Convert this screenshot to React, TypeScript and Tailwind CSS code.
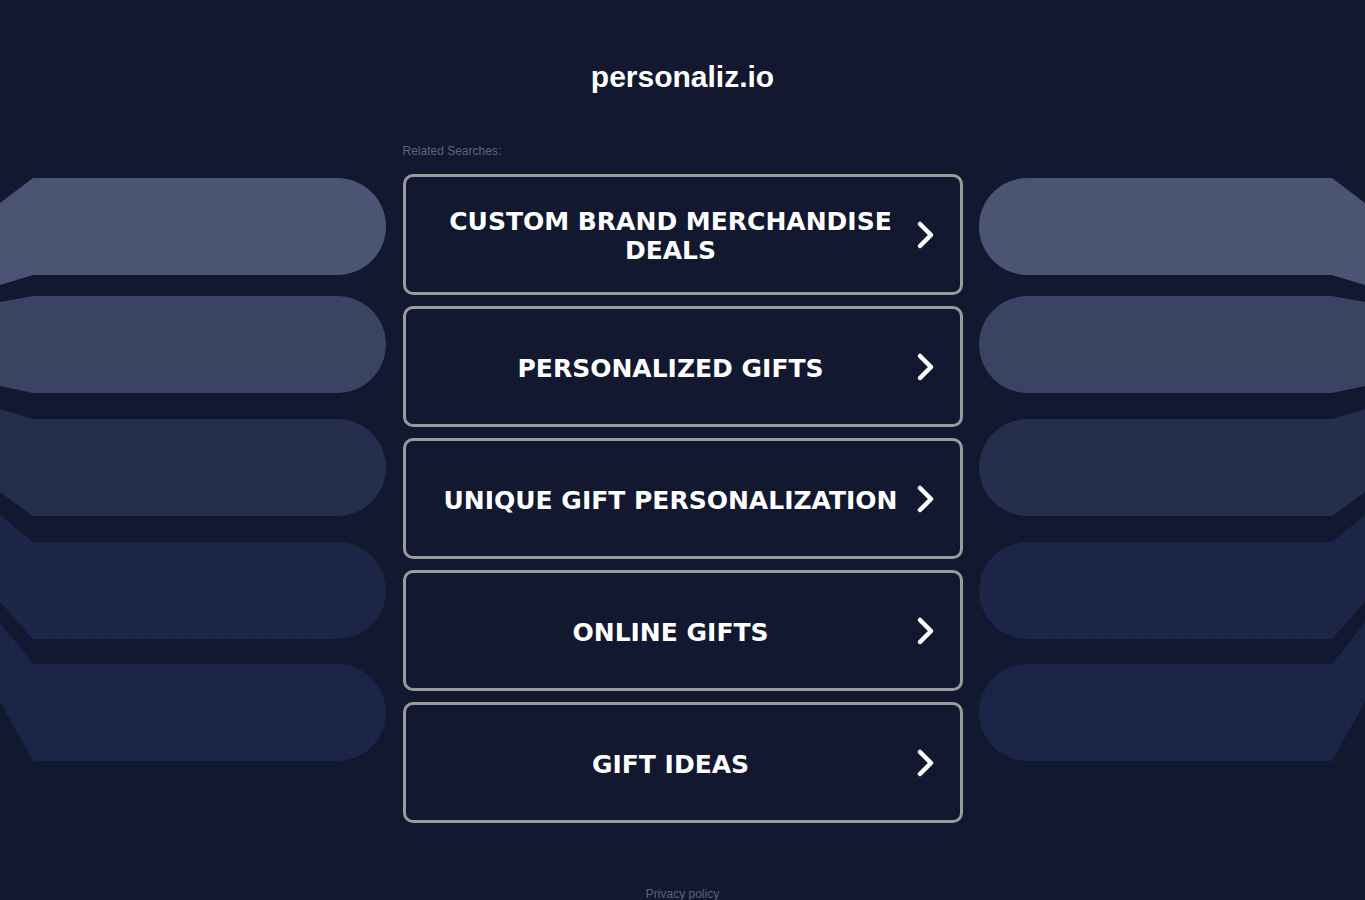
import React from 'react';

const searches = [
  'Custom Brand Merchandise Deals',
  'Personalized Gifts',
  'Unique Gift Personalization',
  'Online Gifts',
  'Gift Ideas',
];

// background fan shapes, left side coords (mirrored for right side)
const bands = [
  { top: 178, bottom: 275, lt: 203, lb: 285, fill: '#4b5573' },
  { top: 296, bottom: 393, lt: 302, lb: 386, fill: '#3a4462' },
  { top: 419, bottom: 516, lt: 409, lb: 492, fill: '#252e4d' },
  { top: 542, bottom: 639, lt: 515, lb: 602, fill: '#1c2545', dots: true },
  { top: 664, bottom: 761, lt: 622, lb: 702, fill: '#1a2446', dots: true },
];

const bandPath = (b: typeof bands[number]) => {
  const r = (b.bottom - b.top) / 2;
  const cx = 386 - r;
  return `M0,${b.lt} L33,${b.top} L${cx},${b.top} A${r},${r} 0 0 1 ${cx},${b.bottom} L33,${b.bottom} L0,${b.lb} Z`;
};

const Fan: React.FC<{ flip?: boolean }> = ({ flip }) => (
  <svg
    width="400"
    height="900"
    viewBox="0 0 400 900"
    className={`absolute top-0 ${flip ? 'right-0 -scale-x-100' : 'left-0'}`}
  >
    <defs>
      <pattern id={flip ? 'dotsR' : 'dotsL'} width="5" height="5" patternUnits="userSpaceOnUse">
        <rect x="2" y="2" width="1" height="1" fill="#34406a" opacity="0.35" />
      </pattern>
    </defs>
    {bands.map((b, i) => (
      <g key={i}>
        <path d={bandPath(b)} fill={b.fill} />
        {b.dots && <path d={bandPath(b)} fill={`url(#${flip ? 'dotsR' : 'dotsL'})`} />}
      </g>
    ))}
  </svg>
);

const Chevron = () => (
  <svg width="20" height="30" viewBox="0 0 20 30" className="shrink-0">
    <path d="M4 4 L15 15 L4 26" fill="none" stroke="#ffffff" strokeWidth="4.5" strokeLinecap="round" strokeLinejoin="round" />
  </svg>
);

export default function App() {
  return (
    <div className="relative min-h-[900px] w-full overflow-hidden bg-[#111830] font-['Liberation_Sans',Arial,sans-serif]">
      <Fan />
      <Fan flip />

      <div className="relative flex flex-col items-center">
        <h1 className="mt-[59px] text-[30px] font-bold leading-[36px] text-white">personaliz.io</h1>

        <div className="mt-[49px] w-[560px]">
          <p className="text-[12px] leading-[14px] text-[#5b6585]">Related Searches:</p>

          <div className="mt-[16px] flex flex-col gap-[11px]">
            {searches.map((s) => (
              <a
                key={s}
                href="#"
                className="flex h-[121px] items-center rounded-[10px] border-[3px] border-[#9b9b9b] bg-[#111830] pl-[26px] pr-[24px]"
              >
                <span className="flex-1 pr-[6px] pt-[3px] text-center font-['DejaVu_Sans',Verdana,sans-serif] text-[25px] font-bold uppercase leading-[29px] text-white">
                  {s}
                </span>
                <Chevron />
              </a>
            ))}
          </div>
        </div>

        <p className="mt-[64px] text-[12px] leading-[14px] text-[#5c6482]">Privacy policy</p>
      </div>
    </div>
  );
}
